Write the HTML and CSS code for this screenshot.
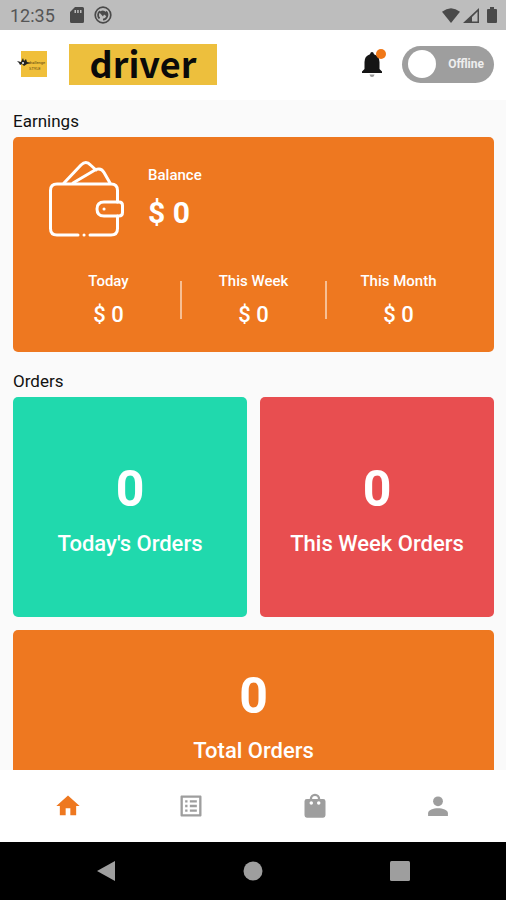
FILE: index.html
```html
<!DOCTYPE html>
<html lang="en">
<head>
  <meta charset="UTF-8" />
  <meta name="viewport" content="width=device-width, initial-scale=1.0" />
  <title>Driver</title>
  <link rel="stylesheet" href="styles.css">
</head>
<body>
  <div class="status-bar">
    <span class="clock">12:35</span>
    <svg class="sd" width="14" height="16" viewBox="0 0 14 16"><path fill="#4a4a4a" fill-rule="evenodd" d="M5 0h7.500q1.500 0 1.500 1.500v13q0 1.500-1.500 1.500h-11Q0 16 0 14.500V5zM4.500 3v3H6V3zM7.200 3v3h1.500V3zM10 3v3h1.500V3z"/></svg>
    <svg width="18" height="18" viewBox="0 0 18 18" fill="none" stroke="#4a4a4a"><circle cx="9" cy="9" r="7.800" stroke-width="1.700"/><path stroke-width="1.800" d="M5.500 12.500A4.800 4.800 0 0 1 6 5.200M12 5.500a4.800 4.800 0 0 1-3 8.200"/><path fill="#4a4a4a" stroke="none" d="M5 6q4-3 7 0 2 2 1.500 5L10 8.500 9 10.500z"/></svg>
    <div class="signals">
      <svg width="18" height="15" viewBox="0 0 18 15"><path fill="#4a4a4a" d="M9 15L0 3.800Q9-3.500 18 3.800z"/></svg>
      <svg width="16" height="15" viewBox="0 0 16 15"><path fill="#4a4a4a" fill-rule="evenodd" d="M16 0v15H0zM14.500 3.500L9 9v4.500h5.500z"/></svg>
      <svg class="battery" width="10" height="16" viewBox="0 0 10 16"><path fill="#4a4a4a" d="M3 0h4v2h2q1 0 1 1v12q0 1-1 1H1q-1 0-1-1V3q0-1 1-1h2z"/></svg>
    </div>
  </div>

  <header>
    <svg class="logo" width="30" height="26" viewBox="0 0 30 26">
      <rect x="4" width="26" height="26" fill="#f0bf3a"/>
      <path fill="#222" d="M0 10l4 1 2-4 1 3 2-2 1 3 4 1-4 1-3 2-2-2-2 1-1-2z"/>
      <circle cx="6" cy="12" r="1" fill="#fff"/>
      <text x="11" y="13" class="logo-text">challenge</text>
      <text x="12" y="19" class="logo-text">STYLE</text>
    </svg>
    <h1>driver</h1>
    <button class="bell" aria-label="Notifications">
      <svg width="26" height="30" viewBox="0 0 26 30">
        <path fill="#151515" d="M11 3q1.500 0 2 2.200Q18.500 7 18.500 13v7l2.500 2.500V24H1v-1.500L3.500 20v-7Q3.500 7 9 5.200 9.500 3 11 3z"/>
        <path fill="#999" d="M8.500 25.500h5q-.5 2.500-2.500 2.500t-2.500-2.500z"/>
        <circle cx="20" cy="5" r="5" fill="#f07818"/>
      </svg>
    </button>
    <label class="toggle">
      <input type="checkbox" />
      <span>Offline</span>
    </label>
  </header>

  <main>
    <h2>Earnings</h2>
    <section class="card earnings">
      <div class="balance">
        <svg width="75" height="76" viewBox="0 0 75 76" fill="none" stroke="#fff" stroke-width="3" stroke-linecap="round" stroke-linejoin="round">
          <path d="M29 74H8q-6.500 0-6.500-6.500v-38Q1.500 23 8 23h54q6.500 0 6.500 6.500V41M68.500 55v12.500Q68.500 74 62 74H41M35 74h.1"/>
          <path d="M55 41h15q3.500 0 3.500 3.500v7Q73.500 55 70 55H55q-7 0-7-7t7-7zM55 48h.1"/>
          <path d="M15 22L32 4q5-5 9.500 0L47 9M24 22L46 9q6-3 9 2.500L61 22"/>
        </svg>
        <div class="money">
          <p>Balance</p>
          <strong>$ 0</strong>
        </div>
      </div>
      <div class="stats">
        <div class="money small">
          <p>Today</p>
          <strong>$ 0</strong>
        </div>
        <span class="divider"></span>
        <div class="money small">
          <p>This Week</p>
          <strong>$ 0</strong>
        </div>
        <span class="divider"></span>
        <div class="money small">
          <p>This Month</p>
          <strong>$ 0</strong>
        </div>
      </div>
    </section>

    <h2>Orders</h2>
    <section class="orders">
      <div class="card order green">
        <strong>0</strong>
        <p>Today's Orders</p>
      </div>
      <div class="card order red">
        <strong>0</strong>
        <p>This Week Orders</p>
      </div>
      <div class="card order total">
        <strong>0</strong>
        <p>Total Orders</p>
      </div>
    </section>
  </main>

  <nav class="tabs">
    <a href="#" class="active" aria-label="Home">
      <svg width="28" height="28" viewBox="0 0 24 24"><path d="M10 20v-6h4v6h5v-8h3L12 3 2 12h3v8z"/></svg>
    </a>
    <a href="#" aria-label="Orders">
      <svg width="28" height="28" viewBox="0 0 24 24"><path d="M19 5v14H5V5h14m1.100-2H3.900c-.5 0-.9.400-.9.900v16.200c0 .4.400.9.900.9h16.200c.4 0 .9-.5.900-.9V3.900c0-.5-.5-.9-.9-.9zM11 7h6v2h-6V7zm0 4h6v2h-6v-2zm0 4h6v2h-6zM7 7h2v2H7zm0 4h2v2H7zm0 4h2v2H7z"/></svg>
    </a>
    <a href="#" aria-label="Shop">
      <svg width="28" height="28" viewBox="0 0 24 24"><path fill-rule="evenodd" d="M7.500 6a4.500 4.500 0 0 1 9 0H19q2 0 2 2v12q0 2-2 2H5q-2 0-2-2V8q0-2 2-2zM9.500 6h5a2.500 2.500 0 0 0-5 0zM7.300 9.500a1.500 1.500 0 1 0 3 0 1.500 1.500 0 0 0-3 0zM13.700 9.500a1.500 1.500 0 1 0 3 0 1.500 1.500 0 0 0-3 0z"/></svg>
    </a>
    <a href="#" aria-label="Profile">
      <svg width="28" height="28" viewBox="0 0 24 24"><circle cx="12" cy="8" r="4.200"/><path d="M3.500 20.500v-2.300c0-2.800 4.500-4.200 8.500-4.200s8.500 1.400 8.500 4.200v2.300z"/></svg>
    </a>
  </nav>

  <div class="system-bar">
    <button aria-label="Back"><svg width="20" height="22" viewBox="0 0 20 22"><path d="M19 1v20L1 11z"/></svg></button>
    <button aria-label="Home screen"><svg width="20" height="20" viewBox="0 0 20 20"><circle cx="10" cy="10" r="9.500"/></svg></button>
    <button aria-label="Recent apps"><svg width="20" height="20" viewBox="0 0 20 20"><rect width="20" height="20" rx="1.500"/></svg></button>
  </div>
</body>
</html>
```
FILE: styles.css
```css
* {
  box-sizing: border-box;
}

body {
  margin: 0;
  height: 100vh;
  display: flex;
  flex-direction: column;
  font-family: Roboto, sans-serif;
  background-color: #fafafa;
  color: #111;
}

h1, h2, p {
  margin: 0;
}

svg {
  display: block;
}

button {
  padding: 0;
  border: none;
  background: none;
}

.status-bar {
  display: flex;
  align-items: center;
  gap: 10px;
  flex: none;
  height: 30px;
  padding: 0 9px 0 10px;
  background-color: #bdbdbd;
  color: #555;
}

.clock {
  font-size: 18px;
}

.sd {
  margin-left: 5px;
}

.signals {
  display: flex;
  align-items: center;
  gap: 3px;
  margin-left: auto;
}

.battery {
  margin-left: 5px;
}

header {
  display: flex;
  align-items: center;
  flex: none;
  height: 70px;
  padding: 0 12px 2px 17px;
  background-color: white;
}

.logo-text {
  font-size: 4px;
  fill: #5a4510;
}

h1 {
  width: 148px;
  margin-left: 22px;
  padding-bottom: 5px;
  background-color: #edbf3d;
  color: #0a0a0a;
  font-family: "Noto Sans CJK SC", sans-serif;
  font-size: 36px;
  line-height: 36px;
  text-align: center;
}

.bell {
  margin-left: auto;
}

.toggle {
  display: flex;
  align-items: center;
  justify-content: space-between;
  width: 92px;
  height: 37px;
  margin-left: 15px;
  padding: 0 10px 0 6px;
  border-radius: 20px;
  background-color: #9e9e9e;
  color: #eee;
  font-size: 12px;
  font-weight: bold;
}

.toggle input {
  appearance: none;
  width: 28px;
  height: 28px;
  margin: 0;
  border-radius: 50%;
  background-color: white;
}

main {
  flex: 1;
  min-height: 0;
  padding: 9px 12px 12px 13px;
  overflow-y: auto;
  scrollbar-width: none;
}

h2 {
  font-size: 17px;
  font-weight: 400;
  line-height: 24px;
  margin-bottom: 4px;
}

.card {
  border-radius: 5px;
  background-color: #ee7820;
  color: white;
}

.earnings {
  padding: 24px 24px 15px;
  margin-bottom: 17px;
}

.balance {
  display: flex;
  gap: 24px;
  padding-left: 12px;
}

.money p {
  font-size: 15px;
  font-weight: 500;
  line-height: 28px;
}

.money strong {
  display: block;
  font-size: 30px;
  line-height: 48px;
}

.stats {
  display: flex;
  margin-top: 32px;
}

.small {
  flex: 1;
  text-align: center;
}

.small p {
  line-height: 24px;
}

.small strong {
  font-size: 22px;
  font-weight: 500;
  line-height: 44px;
}

.divider {
  width: 2px;
  height: 38px;
  margin-top: 12px;
  background-color: #f7bf94;
}

.orders {
  display: grid;
  grid-template-columns: 1fr 1fr;
  gap: 13px;
}

.order {
  display: flex;
  flex-direction: column;
  align-items: center;
  padding: 60px 0 50px;
}

.order strong {
  font-size: 50px;
  line-height: 64px;
}

.order p {
  font-size: 22px;
  font-weight: 500;
  line-height: 46px;
}

.green { background-color: #20d9ad; }
.red { background-color: #e84e50; }

.total {
  grid-column: span 2;
  padding: 34px 0;
}

.tabs {
  display: flex;
  align-items: center;
  flex: none;
  height: 72px;
  padding: 0 6px;
  background-color: white;
}

.tabs a {
  display: flex;
  justify-content: center;
  flex: 1;
  fill: #9e9e9e;
}

.tabs .active {
  fill: #ee7820;
}

.system-bar {
  display: flex;
  align-items: center;
  flex: none;
  height: 58px;
  padding: 0 33px;
  background-color: black;
}

.system-bar button {
  display: flex;
  justify-content: center;
  flex: 1;
  fill: #9e9e9e;
}
```
